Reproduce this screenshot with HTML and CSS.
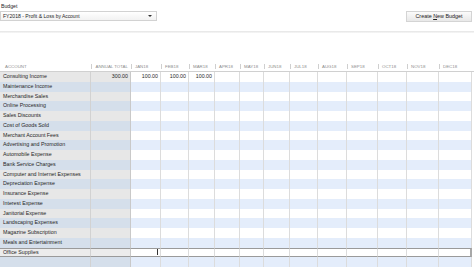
FILE: index.html
```html
<!DOCTYPE html>
<html lang="en">
<head>
<meta charset="UTF-8">
<meta name="viewport" content="width=device-width, initial-scale=1.0">
<title>Set Up Budgets</title>
<link rel="stylesheet" href="styles.css">
</head>
<body>
<div class="top">
  <div class="pick">
    <div class="label">Budget</div>
    <div class="select">FY2018 - Profit &amp; Loss <span class="sub">by Account</span><span class="arrow"></span></div>
  </div>
  <div class="btn">Create <u>N</u>ew Budget</div>
</div>
<div class="rule"></div>

<div class="sheet">
  <div class="row head">
    <div class="acct">ACCOUNT</div><div class="tot">ANNUAL TOTAL</div>
    <span>JAN18</span><span>FEB18</span><span>MAR18</span><span>APR18</span><span>MAY18</span><span>JUN18</span>
    <span>JUL18</span><span>AUG18</span><span>SEP18</span><span>OCT18</span><span>NOV18</span><span>DEC18</span>
  </div>
  <div class="row"><div class="acct">Consulting Income</div><div class="tot">300.00</div><span>100.00</span><span>100.00</span><span>100.00</span><span></span><span></span><span></span><span></span><span></span><span></span><span></span><span></span><span></span></div>
  <div class="row alt"><div class="acct">Maintenance Income</div><div class="tot"></div><span></span><span></span><span></span><span></span><span></span><span></span><span></span><span></span><span></span><span></span><span></span><span></span></div>
  <div class="row"><div class="acct">Merchandise Sales</div><div class="tot"></div><span></span><span></span><span></span><span></span><span></span><span></span><span></span><span></span><span></span><span></span><span></span><span></span></div>
  <div class="row alt"><div class="acct">Online Processing</div><div class="tot"></div><span></span><span></span><span></span><span></span><span></span><span></span><span></span><span></span><span></span><span></span><span></span><span></span></div>
  <div class="row"><div class="acct">Sales Discounts</div><div class="tot"></div><span></span><span></span><span></span><span></span><span></span><span></span><span></span><span></span><span></span><span></span><span></span><span></span></div>
  <div class="row alt"><div class="acct">Cost of Goods Sold</div><div class="tot"></div><span></span><span></span><span></span><span></span><span></span><span></span><span></span><span></span><span></span><span></span><span></span><span></span></div>
  <div class="row"><div class="acct">Merchant Account Fees</div><div class="tot"></div><span></span><span></span><span></span><span></span><span></span><span></span><span></span><span></span><span></span><span></span><span></span><span></span></div>
  <div class="row alt"><div class="acct">Advertising and Promotion</div><div class="tot"></div><span></span><span></span><span></span><span></span><span></span><span></span><span></span><span></span><span></span><span></span><span></span><span></span></div>
  <div class="row"><div class="acct">Automobile Expense</div><div class="tot"></div><span></span><span></span><span></span><span></span><span></span><span></span><span></span><span></span><span></span><span></span><span></span><span></span></div>
  <div class="row alt"><div class="acct">Bank Service Charges</div><div class="tot"></div><span></span><span></span><span></span><span></span><span></span><span></span><span></span><span></span><span></span><span></span><span></span><span></span></div>
  <div class="row"><div class="acct">Computer and Internet Expenses</div><div class="tot"></div><span></span><span></span><span></span><span></span><span></span><span></span><span></span><span></span><span></span><span></span><span></span><span></span></div>
  <div class="row alt"><div class="acct">Depreciation Expense</div><div class="tot"></div><span></span><span></span><span></span><span></span><span></span><span></span><span></span><span></span><span></span><span></span><span></span><span></span></div>
  <div class="row"><div class="acct">Insurance Expense</div><div class="tot"></div><span></span><span></span><span></span><span></span><span></span><span></span><span></span><span></span><span></span><span></span><span></span><span></span></div>
  <div class="row alt"><div class="acct">Interest Expense</div><div class="tot"></div><span></span><span></span><span></span><span></span><span></span><span></span><span></span><span></span><span></span><span></span><span></span><span></span></div>
  <div class="row"><div class="acct">Janitorial Expense</div><div class="tot"></div><span></span><span></span><span></span><span></span><span></span><span></span><span></span><span></span><span></span><span></span><span></span><span></span></div>
  <div class="row alt"><div class="acct">Landscaping Expenses</div><div class="tot"></div><span></span><span></span><span></span><span></span><span></span><span></span><span></span><span></span><span></span><span></span><span></span><span></span></div>
  <div class="row"><div class="acct">Magazine Subscription</div><div class="tot"></div><span></span><span></span><span></span><span></span><span></span><span></span><span></span><span></span><span></span><span></span><span></span><span></span></div>
  <div class="row alt"><div class="acct">Meals and Entertainment</div><div class="tot"></div><span></span><span></span><span></span><span></span><span></span><span></span><span></span><span></span><span></span><span></span><span></span><span></span></div>
  <div class="row edit"><div class="acct">Office Supplies</div><div class="tot"></div><span><b class="caret"></b></span><span></span><span></span><span></span><span></span><span></span><span></span><span></span><span></span><span></span><span></span><span></span></div>
  <div class="row alt"><div class="acct"></div><div class="tot"></div><span></span><span></span><span></span><span></span><span></span><span></span><span></span><span></span><span></span><span></span><span></span><span></span></div>
</div>
</body>
</html>
```

FILE: styles.css
```css
body {
  margin: 0;
  font-family: "Liberation Sans", Arial, sans-serif;
  color: #262626;
  background: #fff;
  overflow: hidden;
}

/* top bar */
.top {
  display: flex;
  justify-content: space-between;
  align-items: flex-start;
  height: 31px;
  padding-top: 2px;
  box-sizing: border-box;
}
.label {
  font-size: 5.2px;
  line-height: 8px;
  padding-left: 1px;
}
.select {
  margin-top: 1px;
  width: 157px;
  height: 10px;
  box-sizing: border-box;
  border: 1px solid #d2d2d2;
  background: linear-gradient(#fff, #f2f2f2);
  font-size: 5.1px;
  line-height: 8px;
  padding-left: 2px;
  position: relative;
}
.select .sub {
  font-size: 4.9px;
}
.arrow {
  position: absolute;
  right: 4px;
  top: 3px;
  border-left: 2px solid transparent;
  border-right: 2px solid transparent;
  border-top: 2px solid #333;
}
.btn {
  margin-top: 9px;
  margin-right: 2px;
  width: 66px;
  height: 11px;
  box-sizing: border-box;
  border: 1px solid #d4d4d4;
  background: linear-gradient(#fbfbfb, #e8e8e8);
  font-size: 5.4px;
  line-height: 9px;
  text-align: center;
  color: #222;
}
.rule {
  height: 2px;
  background: linear-gradient(#e4e4e4, #f7f7f7);
}

/* budget grid */
.sheet {
  margin-top: 29px;
}
.row {
  display: grid;
  grid-template-columns: 91px 40px 30px 28px 26px 25px 24px 26px 28px 29px 31px 29px 32px 33px;
  height: 9.75px;
  font-size: 5.3px;
  line-height: 9.75px;
}
.row > * {
  box-sizing: border-box;
  overflow: hidden;
  white-space: nowrap;
  border-right: 1px solid #dcdcdc;
  background: #fff;
  text-align: right;
  padding-right: 2px;
}
.row .acct {
  text-align: left;
  padding-left: 3px;
  background: #e7e7e7;
  border-right-color: #d2d2d2;
}
.row .tot {
  background: #e7e7e7;
  border-right-color: #c9c9c9;
}
.row.alt > * {
  background: #e4edfb;
}
.row.alt .acct,
.row.alt .tot {
  background: #d5dfeb;
}

.head {
  height: 9px;
  line-height: 9px;
  font-size: 4.4px;
  color: #8e8e8e;
  border-bottom: 1px solid #d0d0d0;
}
.row.head > * {
  border-right: 0;
  text-align: left;
  padding-left: 4px;
  background: linear-gradient(#cfcfcf, #cfcfcf) left center / 1px 5px no-repeat;
}
.row.head .acct {
  background: none;
  padding-left: 5px;
}
.row.head .tot {
  text-align: right;
  padding-right: 3px;
}

.row.edit > * {
  border-top: 1px solid #9a9a9a;
  border-bottom: 1px solid #9a9a9a;
  line-height: 7.75px;
}
.row.edit .acct,
.row.edit .tot {
  background: #ececec;
}
.row.edit > :last-child {
  border-right: 2px solid #a8a8a8;
}
.caret {
  display: inline-block;
  width: 1px;
  height: 6px;
  background: #333;
  vertical-align: middle;
}
```
